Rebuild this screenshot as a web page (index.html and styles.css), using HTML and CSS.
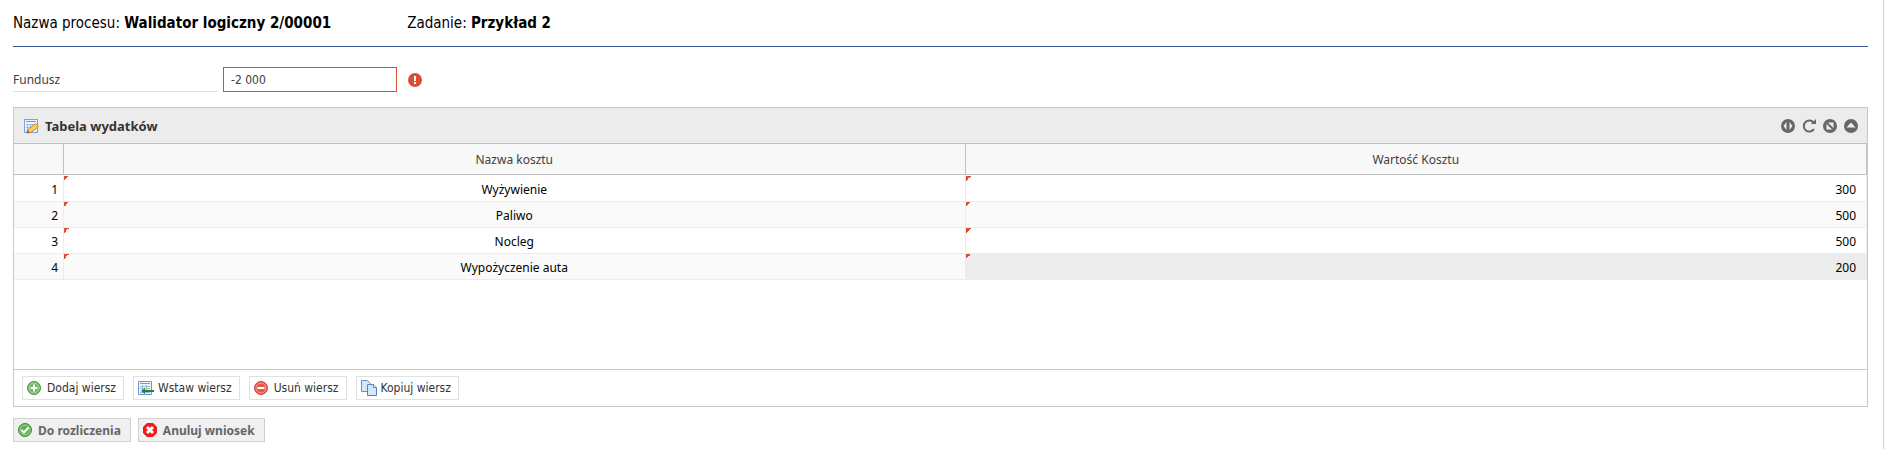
FILE: index.html
```html
<!DOCTYPE html>
<html lang="pl">
<head>
    <meta charset="UTF-8">
    <meta name="viewport" content="width=device-width, initial-scale=1.0">
    <title>Walidator logiczny</title>
    <link rel="stylesheet" href="styles.css">
</head>
<body>
    <main class="page">
        <header class="process-header">
            <div class="process-name">Nazwa procesu: <strong>Walidator logiczny 2/00001</strong></div>
            <div>Zadanie: <strong>Przykład 2</strong></div>
        </header>

        <div class="field">
            <label class="field-label" for="fundusz">Fundusz</label>
            <input class="field-input" type="text" id="fundusz" value="-2 000">
            <svg class="field-error" width="14" height="14" viewBox="0 0 14 14">
                <circle cx="7" cy="7" r="7" fill="#d94e37"/>
                <path d="M6 3h2v5H6zM6 9h2v2H6z" fill="#fff"/>
            </svg>
        </div>

        <section class="panel">
            <div class="panel-header">
                <svg width="16" height="16" viewBox="0 0 16 16">
                    <rect x="1.500" y="1.500" width="13" height="13" fill="#eef4fd" stroke="#7ba3dc"/>
                    <path d="M3 3.500h10" stroke="#6db36d"/>
                    <path d="M3 6.500h10M3 9.500h9M3 12.500h5M4.500 6v7M7.500 6v7" stroke="#9dbbe6"/>
                    <path d="M4 15l1-3.500 7.500-6 3 3-7.500 6z" fill="#fbc962" stroke="#c98b2c"/>
                    <path d="M4 15l.7-2.500 2 1.800z" fill="#704a1c"/>
                </svg>
                <h2 class="panel-title">Tabela wydatków</h2>
                <div class="tools">
                    <button class="tool" type="button" aria-label="Dopasuj kolumny">
                        <svg width="14" height="14" viewBox="0 0 14 14"><circle cx="7" cy="7" r="7" fill="#666"/><path d="M5.500 3v8L2.500 7zM8.500 3v8l3-4z" fill="#ececec"/></svg>
                    </button>
                    <button class="tool" type="button" aria-label="Odśwież">
                        <svg width="14" height="14" viewBox="0 0 14 14"><path d="M11.500 3.500A5.500 5.500 0 1 0 12 10" fill="none" stroke="#666" stroke-width="2"/><path d="M14 0v5H9z" fill="#666"/></svg>
                    </button>
                    <button class="tool" type="button" aria-label="Wyczyść filtry">
                        <svg width="14" height="14" viewBox="0 0 14 14"><circle cx="7" cy="7" r="7" fill="#666"/><path d="M3.500 3.500h7v7h-7z" fill="#ececec"/><path d="M3 3l8 8" stroke="#666" stroke-width="2"/></svg>
                    </button>
                    <button class="tool" type="button" aria-label="Zwiń">
                        <svg width="14" height="14" viewBox="0 0 14 14"><circle cx="7" cy="7" r="7" fill="#666"/><path d="M7 3.500L11.500 8.500h-9z" fill="#ececec"/></svg>
                    </button>
                </div>
            </div>

            <div class="grid-body">
                <table class="grid">
                    <thead>
                        <tr><th class="col-number"></th><th>Nazwa kosztu</th><th>Wartość Kosztu</th></tr>
                    </thead>
                    <tbody>
                        <tr><td class="number">1</td><td class="name dirty">Wyżywienie</td><td class="value dirty">300</td></tr>
                        <tr><td class="number">2</td><td class="name dirty">Paliwo</td><td class="value dirty">500</td></tr>
                        <tr><td class="number">3</td><td class="name dirty">Nocleg</td><td class="value dirty">500</td></tr>
                        <tr><td class="number">4</td><td class="name dirty">Wypożyczenie auta</td><td class="value dirty selected">200</td></tr>
                    </tbody>
                </table>
            </div>

            <div class="toolbar">
                <button class="btn" type="button">
                    <svg width="16" height="16" viewBox="0 0 16 16"><circle cx="7" cy="8" r="6.500" fill="#6fba5f" stroke="#4d9446"/><circle cx="7" cy="8" r="5" fill="none" stroke="#a9dc9c"/><path d="M7 4.500v7M3.500 8h7" stroke="#fff" stroke-width="2"/></svg>
                    Dodaj wiersz
                </button>
                <button class="btn" type="button">
                    <svg width="16" height="16" viewBox="0 0 16 16"><path d="M.5 1.500h13v13H.5z" fill="#eef4fd" stroke="#6a96d2"/><path d="M2 3.500h10" stroke="#6db36d"/><path d="M2 6.500h10M2 8.500h10M2 12.500h10M4.500 5v8M8.500 5v8" stroke="#9dbbe6"/><path d="M3 11l4-3v2h9v2H7v2z" fill="#2e7d32"/></svg>
                    Wstaw wiersz
                </button>
                <button class="btn" type="button">
                    <svg width="16" height="16" viewBox="0 0 16 16"><circle cx="7" cy="8" r="6.500" fill="#e8574b" stroke="#cb4238"/><circle cx="7" cy="8" r="5" fill="none" stroke="#f39c92"/><path d="M3.500 8h7" stroke="#fff" stroke-width="2"/></svg>
                    Usuń wiersz
                </button>
                <button class="btn" type="button">
                    <svg width="16" height="16" viewBox="0 0 16 16"><path d="M.5.500h6l3 3v8h-9z" fill="#d6e6fb" stroke="#5f92d8"/><path d="M6.500 4.500h6l3 3v8h-9z" fill="#d6e6fb" stroke="#4f82cc"/><path d="M12.500 4.500v3h3" fill="#fff" stroke="#4f82cc"/></svg>
                    Kopiuj wiersz
                </button>
            </div>
        </section>

        <div class="actions">
            <button class="btn btn-action" type="button">
                <svg width="16" height="16" viewBox="0 0 16 16"><circle cx="7" cy="8" r="6.500" fill="#5fb350" stroke="#3f8c3a"/><circle cx="7" cy="8" r="5" fill="none" stroke="#a0d694"/><path d="M3.500 8l2.500 2.500 4.500-5" fill="none" stroke="#fff" stroke-width="2"/></svg>
                Do rozliczenia
            </button>
            <button class="btn btn-action" type="button">
                <svg width="16" height="16" viewBox="0 0 16 16"><path d="M4 1h6l4 4v6l-4 4H4l-4-4V5z" fill="#f01c1c"/><path d="M4 5l6 6M10 5l-6 6" stroke="#fff" stroke-width="3"/></svg>
                Anuluj wniosek
            </button>
        </div>
    </main>
</body>
</html>
```
FILE: styles.css
```css
* {
    box-sizing: border-box;
}
body {
    margin: 0;
    font-family: "Noto Sans", sans-serif;
    font-size: 12px;
    color: #404040;
    background: #fff;
}
.page {
    min-height: 100vh;
    margin-right: 1px;
    padding: 0 15px 0 13px;
    border-right: 1px solid #d0d0d0;
}
.process-header {
    display: flex;
    gap: 76px;
    height: 47px;
    padding-top: 13px;
    border-bottom: 1px solid #3a5795;
    font-family: "DejaVu Sans Condensed", "DejaVu Sans", sans-serif;
    font-size: 15px;
    line-height: 20px;
    color: #000;
}
.field {
    display: flex;
    align-items: center;
    padding: 20px 0 15px;
}
.field-label {
    width: 205px;
    height: 25px;
    margin-right: 5px;
    border-bottom: 1px solid #e1e1e1;
    line-height: 25px;
}
.field-input {
    width: 174px;
    height: 25px;
    padding: 0 7px;
    border: 1px solid #d94e37;
    font-family: "DejaVu Sans Condensed", "DejaVu Sans", sans-serif;
    font-size: 12px;
    color: #404040;
}
.field-error {
    margin-left: 11px;
}
.panel {
    border: 1px solid #c8c8c8;
}
.panel-header {
    display: flex;
    align-items: center;
    height: 35px;
    padding: 0 9px;
    background: #ececec;
}
.panel-title {
    margin: 0 0 0 6px;
    font-size: 13px;
    color: #333;
}
.tools {
    display: flex;
    gap: 7px;
    margin-left: auto;
}
.tool {
    display: flex;
    padding: 0;
    border: 0;
    background: none;
}
.grid-body {
    height: 226px;
}
.grid {
    width: 100%;
    table-layout: fixed;
    border-collapse: separate;
    border-spacing: 0;
}
.grid th {
    height: 32px;
    padding: 0;
    border: solid #c0c0c0;
    border-width: 1px 1px 1px 0;
    background: #f8f8f8;
    font-weight: normal;
}
.grid .col-number {
    width: 50px;
}
.grid td {
    height: 26px;
    padding: 2px 0 0;
    border: solid #ececec;
    border-width: 0 1px 1px 0;
    line-height: 23px;
    color: #000;
}
.grid tbody tr:first-child td {
    border-top: 1px solid #fff;
}
.grid tr:nth-child(even) td {
    background-color: #fafafa;
}
.grid .number {
    padding-right: 5px;
    text-align: right;
}
.grid .name {
    text-align: center;
}
.grid .value {
    padding-right: 10px;
    text-align: right;
}
.grid .dirty {
    background-image: linear-gradient(135deg, #d94e37 50%, transparent 50%);
    background-size: 5px 5px;
    background-repeat: no-repeat;
}
.grid tr:nth-child(even) .selected {
    background-color: #ececec;
}
.toolbar {
    display: flex;
    gap: 9px;
    padding: 6px 8px;
    border-top: 1px solid #c8c8c8;
}
.btn {
    display: flex;
    align-items: center;
    gap: 4px;
    height: 24px;
    padding: 0 7px 0 4px;
    border: 1px solid #e1e1e1;
    background: #fff;
    font-family: "DejaVu Sans Condensed", "DejaVu Sans", sans-serif;
    font-size: 12px;
    color: #333;
}
.actions {
    display: flex;
    gap: 7px;
    padding-top: 11px;
}
.btn-action {
    padding-right: 9px;
    border-color: #d0d0d0;
    background: #f0f0f0;
    font-family: "Noto Sans", sans-serif;
    font-weight: bold;
    color: #666;
}
```
